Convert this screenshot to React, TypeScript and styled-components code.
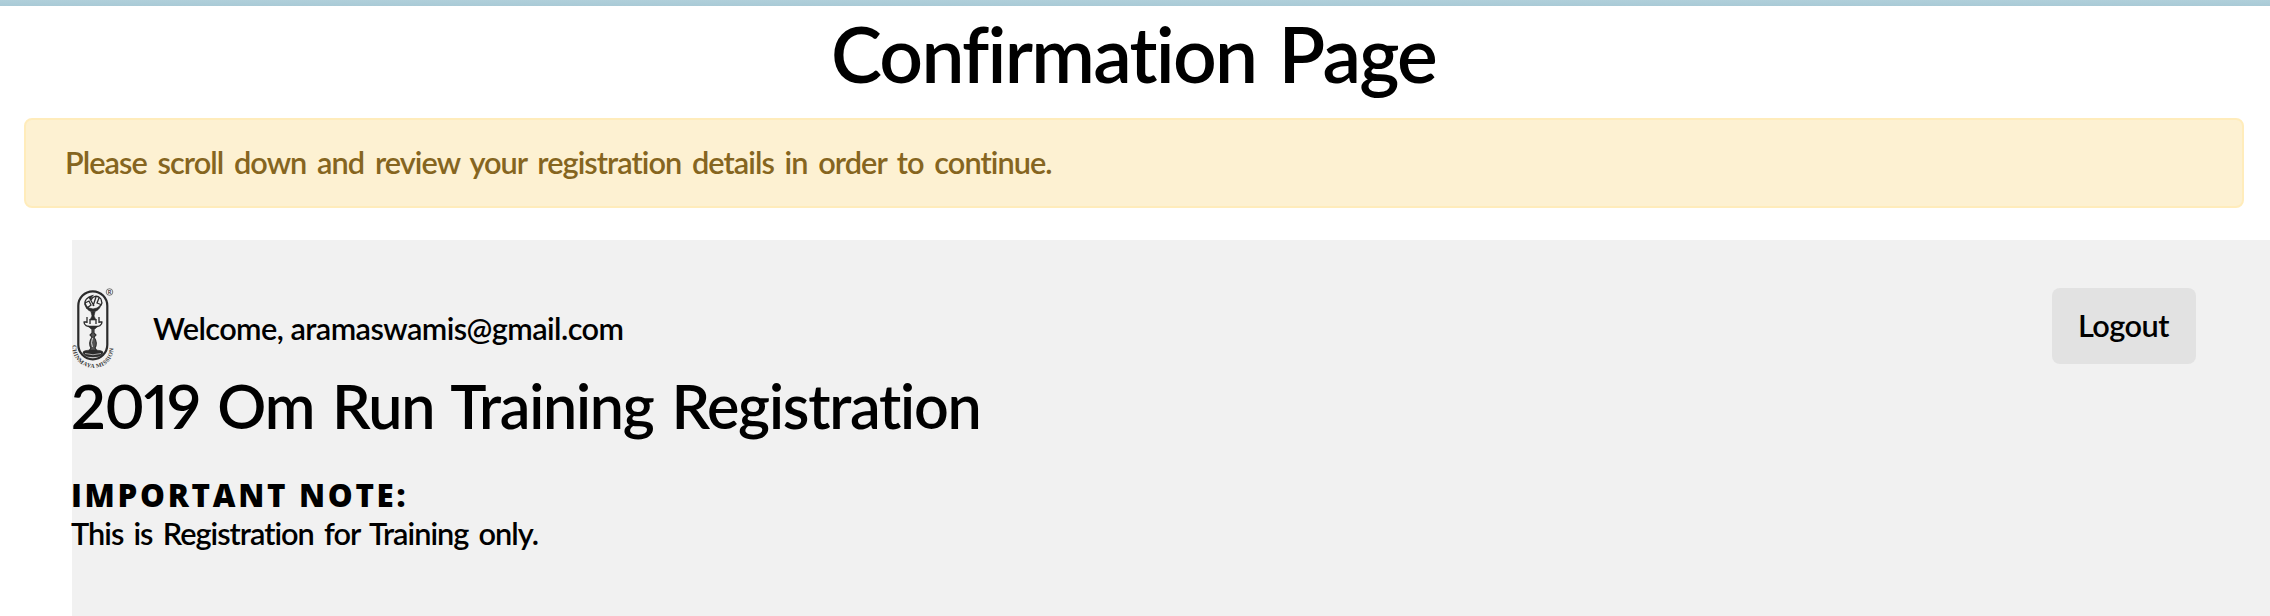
import React from 'react';
import styled, { createGlobalStyle } from 'styled-components';

const GlobalStyle = createGlobalStyle`
  * { box-sizing: border-box; }
  body {
    margin: 0;
    background: #fff;
    color: #000;
    font-family: Lato, 'Open Sans', sans-serif;
    font-size: 30.7px;
    font-weight: 600;
    line-height: 38px;
    font-kerning: normal;
  }
`;

const Page = styled.div`
  display: flex;
  flex-direction: column;
  height: 616px;
  overflow: hidden;
`;

const TopBar = styled.div`
  flex: none;
  height: 6px;
  background: linear-gradient(#b0cfda, #a9cad6);
`;

const PageTitle = styled.h1`
  margin: 0;
  padding: 1px 3px 19px 0;
  text-align: center;
  font-size: 76.7px;
  font-weight: 600;
  line-height: 92px;
  letter-spacing: -1.75px;
  word-spacing: 5px;
`;

const Alert = styled.div`
  margin: 0 26px 32px 24px;
  padding: 24px 39px 24px;
  border: 2px solid #ffecbb;
  border-radius: 8px;
  background: #fdf1d2;
  color: #856520;
  letter-spacing: -0.94px;
  word-spacing: 4px;
`;

const Panel = styled.main`
  flex: 1;
  margin-left: 72px;
  padding-top: 48px;
  background: #f1f1f1;
`;

const Header = styled.header`
  display: flex;
  align-items: flex-start;
  height: 80px;
  padding-right: 74px;
`;

const Welcome = styled.span`
  margin: 22px auto 0 39px;
  letter-spacing: -0.56px;
`;

const LogoutButton = styled.button`
  width: 144px;
  height: 76px;
  padding: 0 1px 1px 0;
  border: 0;
  border-radius: 8px;
  background: #e2e2e2;
  color: #000;
  font: inherit;
  letter-spacing: -0.5px;
`;

const EventTitle = styled.h2`
  margin: 0 0 32px -1px;
  font-size: 61px;
  font-weight: 600;
  line-height: 76px;
  letter-spacing: -1.23px;
  word-spacing: 3.9px;
  font-variant-numeric: proportional-nums;
`;

const Note = styled.p`
  margin: 0 0 0 -1px;
  letter-spacing: -0.98px;
  word-spacing: 3.5px;
`;

const NoteHeading = styled.strong`
  display: block;
  font-family: 'Open Sans', Lato, sans-serif;
  font-size: 31.3px;
  font-weight: 800;
  line-height: 39px;
  letter-spacing: 2.7px;
  word-spacing: 0;
`;

const LogoSvg = styled.svg`
  flex: none;
  display: block;
  width: 42px;
  height: 82px;
`;

const Logo = () => (
  <LogoSvg viewBox="0 0 42 82" fill="none" stroke="#2b2b2b" aria-label="Chinmaya Mission">
    <defs>
      <path id="motto" d="M0.5 57 C-1 86 43 89 41.5 57 L41.5 45" />
    </defs>
    <rect x="6.3" y="3.3" width="29" height="68" rx="14.5" strokeWidth="2.2" />
    <circle cx="37.5" cy="4" r="3.3" strokeWidth="0.6" />
    <text x="37.5" y="6" fontSize="5.5" textAnchor="middle" fill="#2b2b2b" stroke="none">R</text>
    <path d="M13 17c-1-5 3-8 7-9-2 2-2 3-1 4 2-4 6-5 9-2 2 1 1 3 2 5l-2 3M13 15l4-2 2 4-4 3zM27 10l-2 5 5 2M17 9l5 9M24 9l-3 9" strokeWidth="1.3" />
    <path d="M13 17q2 6 8 7 6-1 8-7l-4 3-4 1-4-1z" fill="#2b2b2b" strokeWidth="0.7" />
    <path d="M19 24h4l-1 4 2 4h-6l2-4z" fill="#2b2b2b" strokeWidth="0.6" />
    <path d="M12 34q0 5 9 5t9-5M15 29v6M27 29v6M11.5 34h4M26.5 34h4M18 31v5M24 31v5" strokeWidth="1.3" />
    <path d="M16 38h10l-3 3h-4z" fill="#2b2b2b" strokeWidth="0.5" />
    <path d="M20 41v4l-2 2 2 2q-4 6-1 11l-2 3h8l-2-3q3-5-1-11l2-2-2-2v-4" fill="#555" strokeWidth="1.1" />
    <path d="M20.5 50q-2 5 0 9" stroke="#d5d5d5" strokeWidth="1" />
    <ellipse cx="21" cy="64" rx="10" ry="2" fill="#2b2b2b" strokeWidth="0.6" />
    <path d="M11 64q0 5 10 5t10-5" fill="#2b2b2b" strokeWidth="0.6" />
    <path d="M13 65.5q8 2.5 16 0" stroke="#c8c8c8" strokeWidth="0.8" />
    <text fontFamily="Liberation Serif, serif" fontSize="6" fontWeight="700" fill="#3a3a3a" stroke="none">
      <textPath href="#motto" textLength="66" lengthAdjust="spacing">CHINMAYA MISSION</textPath>
    </text>
  </LogoSvg>
);

export default function App() {
  return (
    <>
      <GlobalStyle />
      <Page>
        <TopBar />
        <PageTitle>Confirmation Page</PageTitle>
        <Alert role="alert">
          Please scroll down and review your registration details in order to continue.
        </Alert>
        <Panel>
          <Header>
            <Logo />
            <Welcome>Welcome, aramaswamis@gmail.com</Welcome>
            <LogoutButton type="button">Logout</LogoutButton>
          </Header>
          <EventTitle>2019 Om Run Training Registration</EventTitle>
          <Note>
            <NoteHeading>IMPORTANT NOTE:</NoteHeading>
            This is Registration for Training only.
          </Note>
        </Panel>
      </Page>
    </>
  );
}
